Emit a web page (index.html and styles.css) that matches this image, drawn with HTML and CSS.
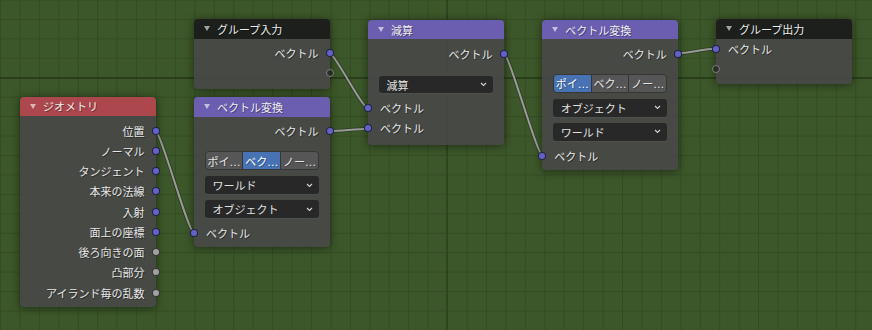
FILE: index.html
```html
<!DOCTYPE html>
<html lang="ja">
<head>
    <meta charset="UTF-8">
    <meta name="viewport" content="width=device-width, initial-scale=1.0">
    <title>ジオメトリノード</title>

    <link rel="stylesheet" href="styles.css">

</head>
<body>
    <div class="canvas">

        <svg class="links" width="872" height="330" viewBox="0 0 872 330">
            <g class="link-shadow">
                <path d="M155.3 131 C161 131 188 232.7 194 232.7" />
                <path d="M329.3 53.3 C335 53.3 362 108.3 368 108.3" />
                <path d="M329.3 131 C342 131 355 129 368 129" />
                <path d="M503.7 53.3 C509 53.3 537 155 542.3 155" />
                <path d="M677.7 53.3 C690 53.3 703 48.7 716 48.7" />
            </g>
            <g class="link">
                <path d="M155.3 131 C161 131 188 232.7 194 232.7" />
                <path d="M329.3 53.3 C335 53.3 362 108.3 368 108.3" />
                <path d="M329.3 131 C342 131 355 129 368 129" />
                <path d="M503.7 53.3 C509 53.3 537 155 542.3 155" />
                <path d="M677.7 53.3 C690 53.3 703 48.7 716 48.7" />
            </g>
        </svg>

        <!-- ジオメトリ -->
        <div class="node node-geometry">
            <div class="node-header header-red"><i class="arrow"></i>ジオメトリ</div>
            <div class="node-body">
                <div class="row out">位置<i class="socket vec"></i></div>
                <div class="row out">ノーマル<i class="socket vec"></i></div>
                <div class="row out">タンジェント<i class="socket vec"></i></div>
                <div class="row out">本来の法線<i class="socket vec"></i></div>
                <div class="row out">入射<i class="socket vec"></i></div>
                <div class="row out">面上の座標<i class="socket vec"></i></div>
                <div class="row out">後ろ向きの面<i class="socket float"></i></div>
                <div class="row out">凸部分<i class="socket float"></i></div>
                <div class="row out">アイランド毎の乱数<i class="socket float"></i></div>
            </div>
        </div>

        <!-- グループ入力 -->
        <div class="node node-group-in">
            <div class="node-header header-dark"><i class="arrow"></i>グループ入力</div>
            <div class="node-body">
                <div class="row out">ベクトル<i class="socket vec"></i></div>
                <div class="row out"><i class="socket empty"></i></div>
            </div>
        </div>

        <!-- ベクトル変換 1 -->
        <div class="node node-transform-a">
            <div class="node-header header-purple"><i class="arrow"></i>ベクトル変換</div>
            <div class="node-body">
                <div class="row out">ベクトル<i class="socket vec"></i></div>
                <div class="segmented">
                    <span class="seg">ポイ…</span>
                    <span class="seg active">ベク…</span>
                    <span class="seg">ノー…</span>
                </div>
                <div class="dropdown">ワールド<svg class="chevron" width="7" height="5" viewBox="0 0 7 5"><path d="M1 1 L3.5 3.5 L6 1" /></svg></div>
                <div class="dropdown">オブジェクト<svg class="chevron" width="7" height="5" viewBox="0 0 7 5"><path d="M1 1 L3.5 3.5 L6 1" /></svg></div>
                <div class="row in last"><i class="socket vec"></i>ベクトル</div>
            </div>
        </div>

        <!-- 減算 -->
        <div class="node node-subtract">
            <div class="node-header header-purple"><i class="arrow"></i>減算</div>
            <div class="node-body">
                <div class="row out">ベクトル<i class="socket vec"></i></div>
                <div class="dropdown dropdown-math">減算<svg class="chevron" width="7" height="5" viewBox="0 0 7 5"><path d="M1 1 L3.5 3.5 L6 1" /></svg></div>
                <div class="row in"><i class="socket vec"></i>ベクトル</div>
                <div class="row in"><i class="socket vec"></i>ベクトル</div>
            </div>
        </div>

        <!-- ベクトル変換 2 -->
        <div class="node node-transform-b">
            <div class="node-header header-purple"><i class="arrow"></i>ベクトル変換</div>
            <div class="node-body">
                <div class="row out">ベクトル<i class="socket vec"></i></div>
                <div class="segmented">
                    <span class="seg active">ポイ…</span>
                    <span class="seg">ベク…</span>
                    <span class="seg">ノー…</span>
                </div>
                <div class="dropdown">オブジェクト<svg class="chevron" width="7" height="5" viewBox="0 0 7 5"><path d="M1 1 L3.5 3.5 L6 1" /></svg></div>
                <div class="dropdown">ワールド<svg class="chevron" width="7" height="5" viewBox="0 0 7 5"><path d="M1 1 L3.5 3.5 L6 1" /></svg></div>
                <div class="row in last"><i class="socket vec"></i>ベクトル</div>
            </div>
        </div>

        <!-- グループ出力 -->
        <div class="node node-group-out">
            <div class="node-header header-dark"><i class="arrow"></i>グループ出力</div>
            <div class="node-body">
                <div class="row in"><i class="socket vec"></i>ベクトル</div>
                <div class="row in"><i class="socket empty"></i></div>
            </div>
        </div>

    </div>
</body>
</html>
```

FILE: styles.css
```css
html, body {
    margin: 0;
    padding: 0;
}

body {
    width: 872px;
    height: 330px;
    overflow: hidden;
    font-family: "DejaVu Sans", "Noto Sans CJK JP", sans-serif;
    font-size: 11px;
    color: #e6e6e6;
}

/* node editor background grid */
.canvas {
    position: relative;
    width: 872px;
    height: 330px;
    background-color: #3c5729;
    background-image:
        linear-gradient(to bottom, transparent 77px, #2a3e1c 77px, #2a3e1c 78.5px, transparent 78.5px),
        linear-gradient(to right, transparent 446px, #2f441f 446px, #2f441f 447.5px, transparent 447.5px),
        linear-gradient(to bottom, #344b24 1px, transparent 1px),
        linear-gradient(to right, #344b24 1px, transparent 1px);
    background-size: 100% 100%, 100% 100%, 19.45px 19.45px, 19.45px 19.45px;
    background-position: 0 0, 0 0, 0 -0.5px, 0 0;
    background-repeat: no-repeat, no-repeat, repeat, repeat;
}

.links {
    position: absolute;
    left: 0;
    top: 0;
}

.links path {
    fill: none;
}

.link-shadow path {
    stroke: rgba(0, 0, 0, 0.3);
    stroke-width: 3.6;
}

.link path {
    stroke: #9a9a9a;
    stroke-width: 2;
}

/* nodes */
.node {
    position: absolute;
    width: 135.5px;
    border-radius: 4px;
    box-shadow: 0 1px 8px rgba(0, 0, 0, 0.5);
}

.node-geometry { left: 20px; top: 96.7px; }
.node-group-in { left: 194px; top: 19.3px; }
.node-transform-a { left: 194px; top: 97.3px; }
.node-subtract { left: 368px; top: 20px; }
.node-transform-b { left: 542.3px; top: 20px; }
.node-group-out { left: 716px; top: 19.3px; }

.node-header {
    height: 19.3px;
    display: flex;
    align-items: center;
    padding-left: 10px;
    border-radius: 4px 4px 0 0;
    color: #eeeeee;
    text-shadow: 1px 1px 0 rgba(0, 0, 0, 0.35);
}

.header-red {
    background-color: #ab474d;
}

.header-purple {
    background-color: #6b5db0;
}

.header-dark {
    background-color: rgba(27, 29, 27, 0.96);
}

.arrow {
    width: 0;
    height: 0;
    border-left: 3px solid transparent;
    border-right: 3px solid transparent;
    border-top: 5px solid rgba(255, 255, 255, 0.6);
    margin-right: 7px;
}

.node-body {
    display: flex;
    flex-direction: column;
    padding: 4.5px 0 4px 0;
    background-color: rgba(72, 72, 72, 0.9);
    border-radius: 0 0 4px 4px;
}

.node-group-in .node-body {
    padding-bottom: 5px;
}

.node-subtract .node-body {
    padding-bottom: 6px;
}

.node-group-out .node-body {
    padding-top: 0;
    padding-bottom: 5px;
}

.row {
    position: relative;
    height: 20.25px;
    display: flex;
    align-items: center;
    text-shadow: 1px 1px 0 rgba(0, 0, 0, 0.4);
}

.row.out {
    justify-content: flex-end;
    padding-right: 11px;
}

.row.in {
    padding-left: 12px;
}

.row.in.last {
    margin-top: 5px;
}

.dropdown-math + .row.in {
    margin-top: 5px;
}

/* sockets */
.socket {
    position: absolute;
    top: 50%;
    width: 8px;
    height: 8px;
    box-sizing: border-box;
    border-radius: 50%;
    border: 1px solid rgba(0, 0, 0, 0.65);
    transform: translateY(-50%);
}

.row.out .socket {
    right: -4px;
}

.row.in .socket {
    left: -4px;
}

.socket.vec {
    background-color: #6363c7;
}

.socket.float {
    background-color: #a1a1a1;
}

.socket.empty {
    background-color: rgba(20, 20, 20, 0.45);
    border: 1px solid #7d7d7d;
}

/* segmented buttons */
.segmented {
    box-sizing: border-box;
    display: flex;
    gap: 1px;
    height: 18.5px;
    margin: 10px 10.5px 0 10.5px;
    background-color: #363636;
    border: 1px solid #363636;
    border-radius: 4px;
    overflow: hidden;
}

.seg {
    flex: 1;
    display: flex;
    align-items: center;
    justify-content: center;
    background-color: #565656;
    color: #e6e6e6;
    text-shadow: 1px 1px 0 rgba(0, 0, 0, 0.3);
}

.seg.active {
    background-color: #4772b3;
    color: #ffffff;
}

/* dropdowns */
.dropdown {
    height: 17.5px;
    margin: 6.5px 10.5px 0 10.5px;
    display: flex;
    align-items: center;
    justify-content: space-between;
    padding: 0 6px 0 8px;
    background-color: #282828;
    border-radius: 3px;
    color: #e0e0e0;
    box-shadow: 0 1px 0 rgba(255, 255, 255, 0.04);
}

.dropdown-math {
    height: 17px;
    margin-top: 12px;
}

.chevron path {
    fill: none;
    stroke: #d0d0d0;
    stroke-width: 1.2;
}
```
